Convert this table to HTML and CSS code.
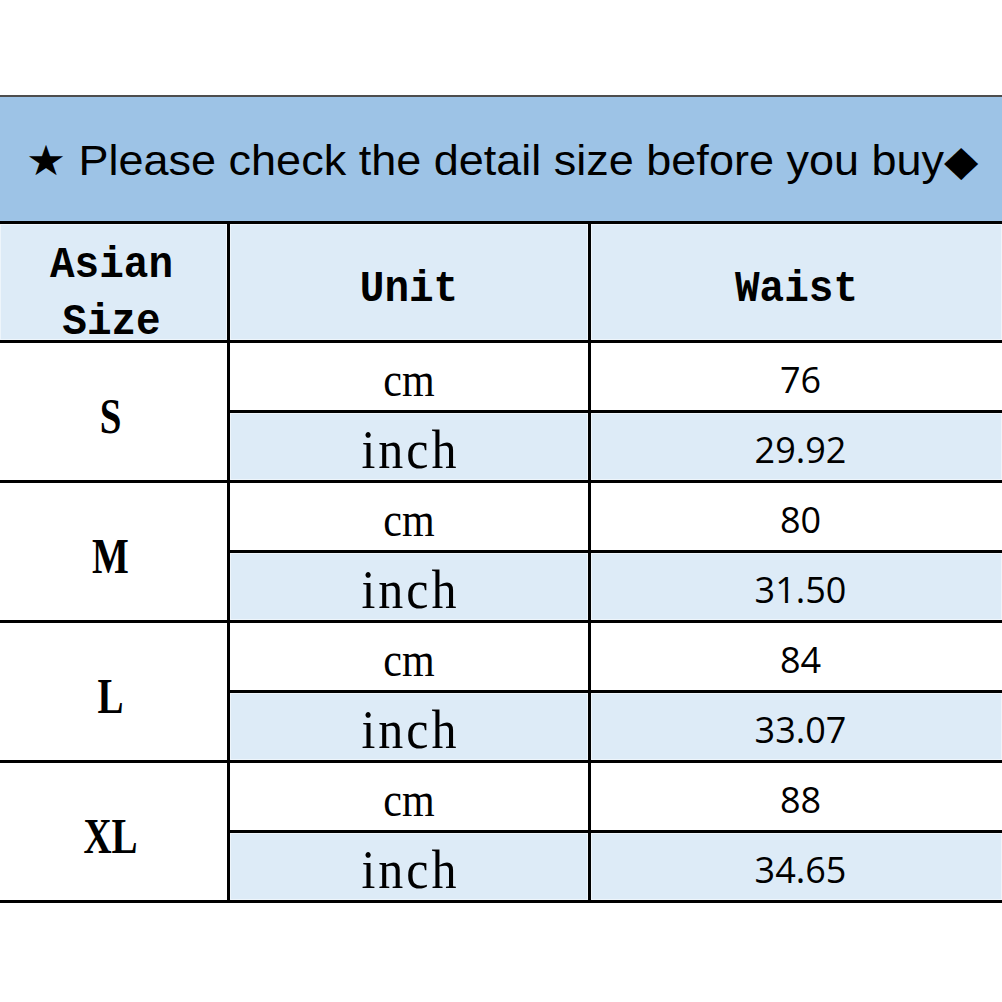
FILE: index.html
```html
<!DOCTYPE html>
<html lang="en">
<head>
<meta charset="utf-8">
<title>Size chart</title>
<link rel="stylesheet" href="styles.css">
</head>
<body>
<div class="sheet">
  <div class="title"><span class="title-text">★ Please check the detail size before you buy◆</span></div>
  <div class="grid">
    <div class="cell head"><span class="mono two">Asian<br>Size</span></div>
    <div class="cell head"><span class="mono">Unit</span></div>
    <div class="cell head"><span class="mono">Waist</span></div>

    <div class="cell size"><span class="sz">S</span></div>
    <div class="cell unit"><span class="u">cm</span></div>
    <div class="cell num">76</div>
    <div class="cell unit alt"><span class="u inch">inch</span></div>
    <div class="cell num alt">29.92</div>

    <div class="cell size"><span class="sz">M</span></div>
    <div class="cell unit"><span class="u">cm</span></div>
    <div class="cell num">80</div>
    <div class="cell unit alt"><span class="u inch">inch</span></div>
    <div class="cell num alt">31.50</div>

    <div class="cell size"><span class="sz">L</span></div>
    <div class="cell unit"><span class="u">cm</span></div>
    <div class="cell num">84</div>
    <div class="cell unit alt"><span class="u inch">inch</span></div>
    <div class="cell num alt">33.07</div>

    <div class="cell size"><span class="sz">XL</span></div>
    <div class="cell unit"><span class="u">cm</span></div>
    <div class="cell num">88</div>
    <div class="cell unit alt"><span class="u inch">inch</span></div>
    <div class="cell num alt">34.65</div>
  </div>
</div>
</body>
</html>
```
FILE: styles.css
```css
html, body {
  margin: 0;
  padding: 0;
  background: #ffffff;
}
.sheet {
  margin-top: 95px;
  width: 1002px;
}
.title {
  border-top: 2px solid #4d4d4d;
  border-bottom: 3px solid #000;
  background: #9dc3e6;
  display: flex;
  align-items: center;
  padding-left: 26px;
  padding-top: 3px;
  box-sizing: border-box;
  height: 129px;
}
.title-text {
  font-family: "Liberation Sans", Arial, sans-serif;
  font-size: 45px;
  color: #000;
  white-space: nowrap;
  display: inline-block;
  transform: scaleY(0.94);
}
.grid {
  display: grid;
  grid-template-columns: 227px 358px 411px;
  grid-template-rows: 116px repeat(8, 67px);
  column-gap: 3px;
  row-gap: 3px;
  background: #000;
  padding-bottom: 3px;
}
.cell {
  display: flex;
  align-items: center;
  justify-content: center;
  background: #fff;
  color: #000;
}
.head {
  background: #ddebf7;
  box-shadow: inset 0 0 0 1px #eef5fb;
  padding-top: 14px;
  box-sizing: border-box;
}
.mono {
  font-family: "Liberation Mono", "Courier New", monospace;
  font-weight: bold;
  font-size: 41px;
  line-height: 52px;
  text-align: center;
  display: inline-block;
  transform: scaleY(1.1);
}
.two {
  margin-top: 8px;
  margin-right: 4px;
}
.size {
  grid-row: span 2;
  grid-column: 1;
  padding-right: 6px;
  padding-top: 8px;
  box-sizing: border-box;
}
.sz {
  font-family: "Liberation Serif", "Times New Roman", serif;
  font-weight: bold;
  font-size: 39px;
  display: inline-block;
  transform: scaleY(1.3);
}
.unit {
  grid-column: 2;
  padding-top: 6px;
  box-sizing: border-box;
}
.u {
  font-family: "Liberation Serif", "Times New Roman", serif;
  font-size: 42px;
  display: inline-block;
  transform: scaleY(1.15);
}
.inch {
  font-size: 50px;
  letter-spacing: 3px;
  margin-right: -3px;
  transform: scaleY(1.08);
}
.num {
  grid-column: 3;
  font-family: "Open Sans", "Liberation Sans", sans-serif;
  font-size: 36px;
  padding-top: 6px;
  padding-left: 8px;
  box-sizing: border-box;
}
.alt {
  background: #ddebf7;
  box-shadow: inset 0 0 0 1px #eef5fb;
}
```
